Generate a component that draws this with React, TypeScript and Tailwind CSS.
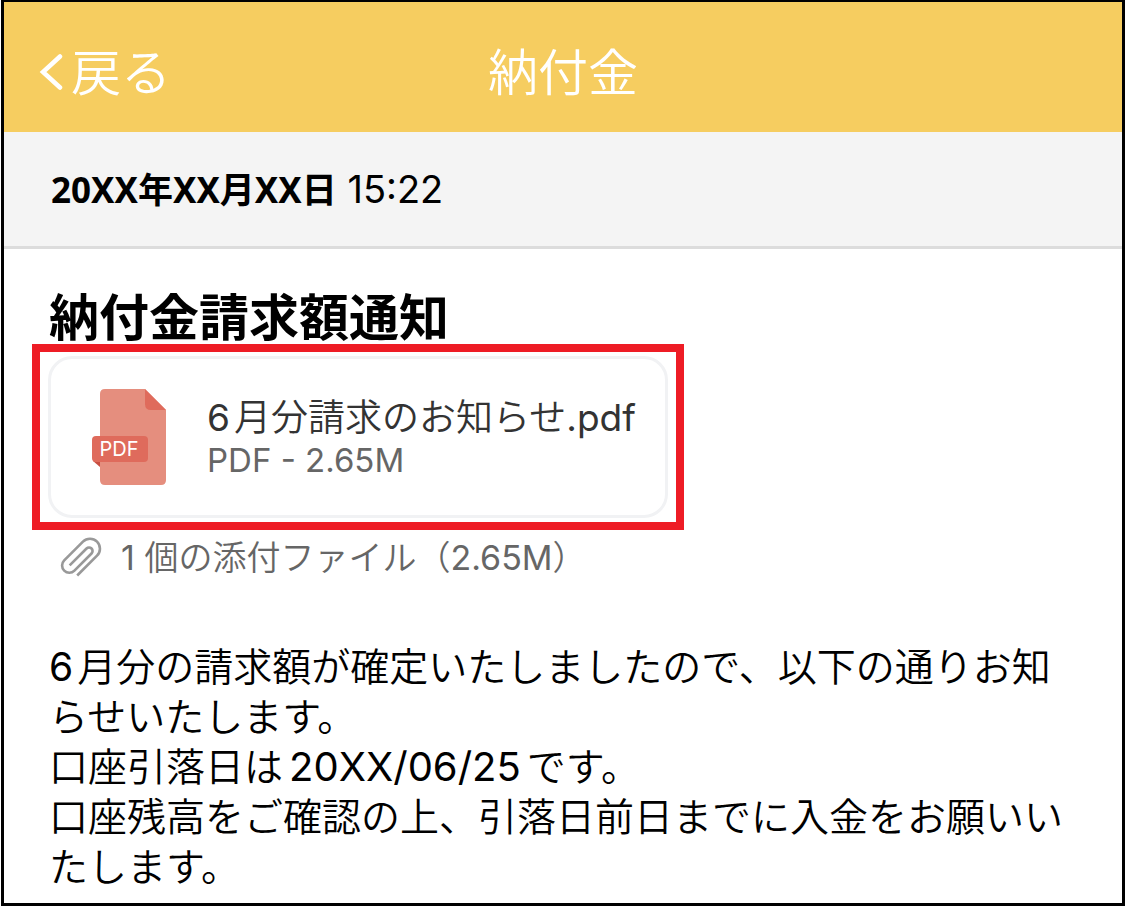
function BackIcon() {
  return (
    <svg viewBox="0 0 24 38" className="h-[38px] w-6" fill="none" stroke="currentColor" strokeWidth="4.500" strokeLinecap="round" aria-hidden="true">
      <path d="M21 2.500 4 18l17 15.500" />
    </svg>
  );
}

function PdfIcon() {
  return (
    <svg viewBox="0 0 76 96" className="h-24 w-[76px] shrink-0" aria-hidden="true">
      <path d="M14 0h40l21 21v70q0 5-5 5H14q-5 0-5-5V5q0-5 5-5" fill="#e58e7e" />
      <path d="M54 0v15q0 6 6 6h15Z" fill="#df6b5c" />
      <path d="M2 72h7v6Z" fill="#c84f42" />
      <rect x="1" y="47" width="56" height="26" rx="4" fill="#df6b5c" />
      <text x="28" y="67" fill="#fff" fontSize="20" textAnchor="middle" className="font-[Inter,sans-serif]">
        PDF
      </text>
    </svg>
  );
}

function ClipIcon() {
  return (
    <svg viewBox="0 0 42 42" className="h-[38px] w-[38px] shrink-0 overflow-visible" fill="none" stroke="#999" strokeWidth="2.900" aria-hidden="true">
      <path
        transform="translate(20.500 20) rotate(45) translate(-11 -24.200)"
        d="M22 42V11A11 11 0 0 0 0 11V40.300A8 8 0 0 0 16 40.300V13.600A3.900 3.900 0 0 0 8.200 13.600V40"
      />
    </svg>
  );
}

export default function App() {
  return (
    <div className="flex min-h-screen bg-white pl-px font-[Inter,'Noto_Sans_CJK_JP',sans-serif] text-black">
      <div className="flex-1 border-[3px] border-t-2 border-black">
        <header className="grid h-[130px] grid-cols-[1fr_auto_1fr] items-center bg-[#f6cd60] px-[35px] pt-3 text-[50px] font-[350] text-white">
          <button type="button" className="flex items-center gap-2 justify-self-start">
            <BackIcon />
            <span>戻る</span>
          </button>
          <h1>納付金</h1>
        </header>
        <div className="flex h-[117px] items-center border-b-[3px] border-[#dcdcdc] bg-[#f4f4f4] px-[47px]">
          <time className="text-[38px]">
            <b className="font-['Noto_Sans','Noto_Sans_CJK_JP',sans-serif] text-[35px]">20XX年XX月XX日</b> 15:22
          </time>
        </div>
        <main className="px-[45px] pt-[43px]">
          <h2 className="text-[50px] leading-[52px] font-bold">納付金請求額通知</h2>
          <section className="-ml-[17px] w-[652px] max-w-full border-8 border-[#ee1c25] px-2 py-1">
            <a href="#attachment" className="flex h-[162px] items-center gap-10 rounded-3xl border-[3px] border-[#f1f2f4] pl-10">
              <PdfIcon />
              <span className="flex flex-col pt-1 leading-[42px]">
                <span className="text-[37px] font-[350] text-[#333]">
                  <span className="mr-1 font-normal">6</span>月分請求のお知らせ<span className="font-normal">.pdf</span>
                </span>
                <span className="text-[33px] text-[#666]">PDF - 2.65M</span>
              </span>
            </a>
          </section>
          <div className="mt-2 flex items-center gap-5 pl-3.5 text-[34px] leading-[40px] font-[350] text-[#666]">
            <ClipIcon />
            <p>
              <span className="font-normal">1 </span>個の添付ファイル（<span className="font-normal">2.65M</span>）
            </p>
          </div>
          <div className="mt-16 text-[39px] leading-[50px] font-[350]">
            <p><span className="mr-1 font-normal">6</span>月分の請求額が確定いたしましたので、以下の通りお知らせいたします。</p>
            <p>口座引落日は<span className="mx-1.5 text-[40px] font-normal">20XX/06/25</span>です。</p>
            <p>口座残高をご確認の上、引落日前日までに入金をお願いいたします。</p>
          </div>
        </main>
      </div>
    </div>
  );
}
